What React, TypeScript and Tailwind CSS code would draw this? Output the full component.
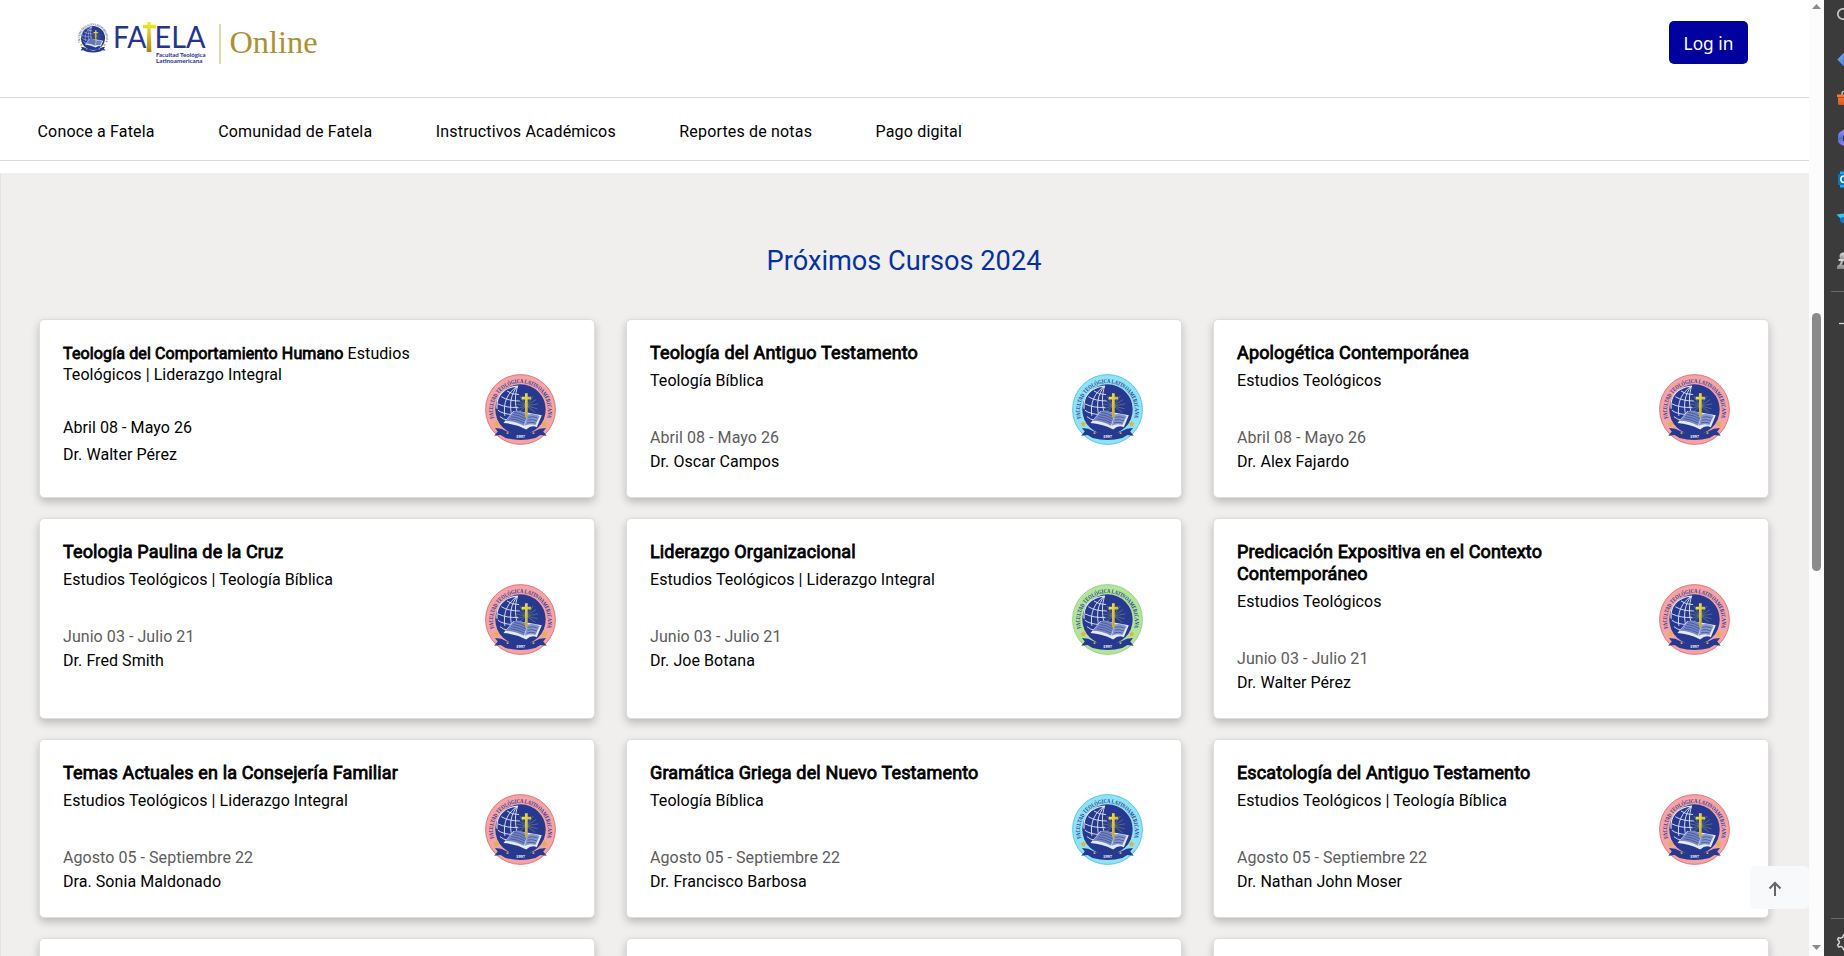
import React from "react";

type Tone = "red" | "blue" | "green";

type Course = {
  title: string;
  area: string;
  date: string;
  teacher: string;
  tone: Tone;
  inline?: boolean;
};

const courses: Course[] = [
  { title: "Teología del Comportamiento Humano", area: "Estudios Teológicos | Liderazgo Integral", date: "Abril 08 - Mayo 26", teacher: "Dr. Walter Pérez", tone: "red", inline: true },
  { title: "Teología del Antiguo Testamento", area: "Teología Bíblica", date: "Abril 08 - Mayo 26", teacher: "Dr. Oscar Campos", tone: "blue" },
  { title: "Apologética Contemporánea", area: "Estudios Teológicos", date: "Abril 08 - Mayo 26", teacher: "Dr. Alex Fajardo", tone: "red" },
  { title: "Teologia Paulina de la Cruz", area: "Estudios Teológicos | Teología Bíblica", date: "Junio 03 - Julio 21", teacher: "Dr. Fred Smith", tone: "red" },
  { title: "Liderazgo Organizacional", area: "Estudios Teológicos | Liderazgo Integral", date: "Junio 03 - Julio 21", teacher: "Dr. Joe Botana", tone: "green" },
  { title: "Predicación Expositiva en el Contexto Contemporáneo", area: "Estudios Teológicos", date: "Junio 03 - Julio 21", teacher: "Dr. Walter Pérez", tone: "red" },
  { title: "Temas Actuales en la Consejería Familiar", area: "Estudios Teológicos | Liderazgo Integral", date: "Agosto 05 - Septiembre 22", teacher: "Dra. Sonia Maldonado", tone: "red" },
  { title: "Gramática Griega del Nuevo Testamento", area: "Teología Bíblica", date: "Agosto 05 - Septiembre 22", teacher: "Dr. Francisco Barbosa", tone: "blue" },
  { title: "Escatología del Antiguo Testamento", area: "Estudios Teológicos | Teología Bíblica", date: "Agosto 05 - Septiembre 22", teacher: "Dr. Nathan John Moser", tone: "red" },
];

const tones: Record<Tone, { fill: string; edge: string }> = {
  red: { fill: "#f4a3a6", edge: "#e0686c" },
  blue: { fill: "#8fe3f7", edge: "#4cc0de" },
  green: { fill: "#b2e59b", edge: "#8fcf7c" },
};

const navItems = ["Conoce a Fatela", "Comunidad de Fatela", "Instructivos Académicos", "Reportes de notas", "Pago digital"];

function Seal({ tone, id, className }: { tone?: Tone; id: string; className: string }) {
  const c = tone ? tones[tone] : { fill: "#ffffff", edge: "#ffffff" };
  return (
    <svg viewBox="0 0 100 100" className={className}>
      <defs>
        <path id={id} d="M 13.5 64 A 38.6 38.6 0 1 1 86.5 64" />
        <linearGradient id={id + "g"} x1="0" x2="1" y1="0" y2="1">
          <stop offset="0" stopColor="#f7ef4e" />
          <stop offset="1" stopColor="#b1952a" />
        </linearGradient>
      </defs>
      <circle cx="50" cy="50" r="49.2" fill={c.fill} stroke={c.edge} strokeWidth="1.2" />
      <circle cx="50" cy="50" r="35.5" fill="#26388f" />
      <g fill="none" stroke="#dfe6f6" strokeWidth="1.3">
        <path d="M17 49C15 31 27 18 46 17" strokeWidth="1.6" />
        <path d="M46 17C32 26 25 40 28 59M46 17C36 28 34 44 38 60M46 17C42 29 42 42 45 53" />
        <path d="M31 24Q38 29 48 29M23 32Q33 38 49 38M18 42Q30 48 47 47M18 51Q26 57 40 57M21 60Q26 64 31 65" />
      </g>
      <g stroke="#8f9b72" strokeWidth=".7">
        <path d="M58 45L45 36M58 45L43 42M58 45L44 49M58 45L49 31M58 45L72 36M58 45L75 42M58 45L74 49M58 45L68 31M58 45L47 54M58 45L71 54" />
      </g>
      <path d="M26 69L40 52L57 54L80 58L73 75Q66 71 58 78Q42 70 26 69Z" fill="#e3e9f6" />
      <path d="M29 66L41 52Q50 50 60 57L55 73Q42 66 29 66Z" fill="#7687c2" />
      <path d="M60 57Q68 55 77 59L71 72Q63 69 56 73Z" fill="#8796ca" />
      <path d="M35 63Q46 64 55 69M37 60Q47 61 56 66M39 57Q49 58 57 63M41 54Q50 55 58 60M61 61Q68 59 74 62M60 65Q66 63 73 66M59 69Q65 67 71 69" fill="none" stroke="#34479a" strokeWidth="1" />
      <path d="M56.3 27H60.2V32H65V35.8H60.2V61H56.3V35.8H51.7V32H56.3Z" fill={`url(#${id}g)`} />
      <path d="M14 76L23 77L31 81Q50 88 69 81L77 77L86 76L82 81L87 87L78 86L71 90Q50 96 29 90L22 86L13 87L18 81Z" fill="#26388f" />
      <path d="M16 66l1.3 2.7 3 .4-2.2 2.1.5 3-2.6-1.4-2.7 1.4.5-3-2.1-2.1 3-.4zM84 66l1.3 2.7 3 .4-2.2 2.1.5 3-2.6-1.4-2.7 1.4.5-3-2.1-2.1 3-.4z" fill="#dcb53e" />
      <path d="M30.500 82h2.500v2.500h-2.500zM67 82h2.500v2.500H67z" fill="#c9b545" />
      <text x="50" y="89.500" fontSize="6.500" textAnchor="middle" fontWeight="700" fill="#ffffff" fontFamily="Liberation Serif, serif">1997</text>
      <text fontSize="8.500" fontWeight="700" fill="#2b3890" fontFamily="Liberation Serif, serif">
        <textPath href={"#" + id} startOffset="2" textLength="142" lengthAdjust="spacingAndGlyphs">FACULTAD TEOLÓGICA LATINOAMERICANA</textPath>
      </text>
    </svg>
  );
}

function Wordmark() {
  return (
    <svg width="246" height="62" viewBox="76 8 246 62">
      <defs>
        <linearGradient id="cross" x1="0" x2="0" y1="0" y2="1">
          <stop offset="0" stopColor="#f5ec25" />
          <stop offset=".45" stopColor="#d9c022" />
          <stop offset="1" stopColor="#a98719" />
        </linearGradient>
      </defs>
      <g fill="#23358f" fontFamily="Lato, sans-serif">
        <text x="113" y="47.800" fontSize="31" fontWeight="400" textLength="33.500" lengthAdjust="spacingAndGlyphs">FA</text>
        <text x="154.500" y="47.800" fontSize="31" fontWeight="400" textLength="51" lengthAdjust="spacingAndGlyphs">ELA</text>
        <text x="156" y="56.600" fontSize="6" fontWeight="700" textLength="49.500" lengthAdjust="spacingAndGlyphs">Facultad Teológica</text>
        <text x="156" y="62.600" fontSize="6" fontWeight="700" textLength="46.500" lengthAdjust="spacingAndGlyphs">Latinoamericana</text>
      </g>
      <path d="M147.200 22h3.600l-.4 2.800h5.600v3.400h-5.400l.8 23.800h-4.800l.8-23.800H143v-3.400h4.600z" fill="url(#cross)" />
      <path d="M220 24v40" stroke="#d8c486" strokeWidth="1.400" />
      <text x="229.500" y="52.900" fontSize="31.500" fill="#ab9135" fontFamily="Liberation Serif, serif" textLength="88" lengthAdjust="spacingAndGlyphs">Online</text>
    </svg>
  );
}

function CourseCard({ course, index }: { course: Course; index: number }) {
  return (
    <article className="flex items-center justify-between rounded-[5px] border border-[#dedddc] bg-white pr-[38px] pl-[23px] shadow-[0_4px_8px_rgba(0,0,0,0.22)]">
      {course.inline ? (
        <div className="w-[360px] self-start pt-[23px] text-base leading-[21px] tracking-[0.06px]">
          <p>
            <span className="tracking-[0.13px] [-webkit-text-stroke:0.8px_black]">{course.title}</span> {course.area}
          </p>
          <p className="mt-8">{course.date}</p>
          <p className="mt-1.5">{course.teacher}</p>
        </div>
      ) : (
        <div className="w-[360px] self-start pt-[22px] pb-[25px] text-base leading-[21px] tracking-[0.06px]">
          <h3 className="text-lg leading-[22px] tracking-[0.14px] [-webkit-text-stroke:0.8px_black]">{course.title}</h3>
          <p className="mt-1.5">{course.area}</p>
          <p className="mt-9 text-[#5c5c5c]">{course.date}</p>
          <p className="mt-[3px]">{course.teacher}</p>
        </div>
      )}
      <Seal tone={course.tone} id={"ring" + index} className="mt-0.5 size-[71px]" />
    </article>
  );
}

function BrowserRail() {
  return (
    <aside className="flex w-5 shrink-0 flex-col overflow-hidden bg-[#3b3b3b]">
      <svg width="20" height="956" viewBox="1824 0 20 956">
        <defs>
          <linearGradient id="tag" x1="0" x2="1" y1="0" y2="1">
            <stop offset="0" stopColor="#86adf5" />
            <stop offset="1" stopColor="#4478d8" />
          </linearGradient>
          <linearGradient id="bag" x1="0" x2="0" y1="0" y2="1">
            <stop offset="0" stopColor="#f4803c" />
            <stop offset="1" stopColor="#e2541b" />
          </linearGradient>
          <linearGradient id="m365" x1="0" x2="0" y1="0" y2="1">
            <stop offset="0" stopColor="#b48cf0" />
            <stop offset=".55" stopColor="#4b6fdc" />
            <stop offset="1" stopColor="#b47ae8" />
          </linearGradient>
          <linearGradient id="pawn" x1="0" x2="0" y1="0" y2="1">
            <stop offset="0" stopColor="#d8d8d8" />
            <stop offset="1" stopColor="#858585" />
          </linearGradient>
        </defs>
        <circle cx="1843" cy="14" r="5.200" fill="none" stroke="#c9c9c9" strokeWidth="1.700" />
        <path d="M1838 59.500L1845 52v15z" fill="url(#tag)" stroke="url(#tag)" strokeLinejoin="round" />
        <path d="M1842 95v-1.500a2 2 0 0 1 2-2" fill="none" stroke="#c8c8c8" strokeWidth="1.400" />
        <path d="M1837 94.500h8v10.500h-5.500a1.500 1.500 0 0 1-1.500-1.500V97h-1z" fill="url(#bag)" />
        <path d="M1837.500 97.500h7" stroke="#b33d10" strokeWidth=".8" />
        <path d="M1845 129l-5 3q-2 1.500-2 3.500v5q0 2 2 3.500l5 2.500z" fill="url(#m365)" />
        <path d="M1845 134q-2 1-2 3v4h2z" fill="#3b3b3b" />
        <path d="M1840 171.500h5v16h-5z" fill="#28a8ea" />
        <rect x="1838" y="174" width="10" height="11" rx="1" fill="#0078d4" />
        <circle cx="1844" cy="179.300" r="3.200" fill="none" stroke="white" strokeWidth="1.500" />
        <path d="M1836.500 214.500l8.500-1v9l-4-1-1-3.500z" fill="#35c4f0" />
        <path d="M1840 218l5-1.500v7l-4-1z" fill="#1478c8" />
        <circle cx="1843.500" cy="256.500" r="4" fill="url(#pawn)" />
        <path d="M1838.500 259h6v2h-1.500l-1 4h2.500v4h-7.500v-2q0-2 2.500-2.500l1.500-3.500h-2.500z" fill="url(#pawn)" />
        <path d="M1831 291.500h13" stroke="#6a6a6a" />
        <path d="M1839 323.500h5" stroke="#d4d4d4" strokeWidth="1.300" />
        <path d="M1831 918.500h13" stroke="#6a6a6a" />
        <path d="M1845 934.500l-1.500.5-.7 2.200-2 1-2.200-.6-1 2 1.600 1.700v2l-1.600 1.700 1 2 2.200-.6 2 1 .7 2.200 1.500.4" fill="none" stroke="#d4d4d4" strokeWidth="1.500" strokeLinejoin="round" />
      </svg>
    </aside>
  );
}

export default function App() {
  return (
    <div className="flex h-[956px] w-[1844px] overflow-hidden bg-white font-['Roboto',sans-serif] text-black">
      <div className="relative flex w-[1809px] shrink-0 flex-col overflow-hidden">
        <header className="flex h-[98px] shrink-0 items-start justify-between border-b border-[#d8d9da] pr-[61px] pl-[76px]">
          <div className="pt-2">
            <div className="relative">
              <Wordmark />
              <Seal id="brand" className="absolute top-[13px] left-0 size-[34px]" />
            </div>
          </div>
          <button className="mt-[21px] h-[43px] w-[79px] rounded-[5px] bg-[#00009f] pt-0.5 font-['Noto_Sans',sans-serif] text-[17.300px] text-white">Log in</button>
        </header>
        <nav className="flex h-[63px] shrink-0 items-center gap-[63.500px] border-b border-[#d8d9da] pt-1.5 pl-[37.500px] text-base tracking-[0.17px]">
          {navItems.map((item) => (
            <a key={item}>{item}</a>
          ))}
        </nav>
        <main className="mt-3 flex min-h-0 flex-1 flex-col overflow-hidden border-l border-[#e3e3e3] bg-[#f0efee]">
          <h2 className="mt-[72px] mb-[41px] shrink-0 pr-0.5 text-center text-[27.200px] leading-[33px] text-[#0532a0]">Próximos Cursos 2024</h2>
          <section className="grid shrink-0 grid-cols-[repeat(3,556px)] grid-rows-[179px_201px_179px_179px] gap-x-[31px] gap-y-5 pl-[38px]">
            {courses.map((course, i) => (
              <CourseCard key={course.title} course={course} index={i} />
            ))}
            {[0, 1, 2].map((i) => (
              <div key={i} className="rounded-[5px] border border-[#dedddc] bg-white shadow-[0_4px_8px_rgba(0,0,0,0.22)]" />
            ))}
          </section>
        </main>
        <button className="absolute top-[866px] right-0 flex h-[43px] w-[59px] items-center rounded-[5px] bg-[#f8f9fa] pt-0.5 pl-[18px]">
          <svg width="14" height="16" viewBox="0 0 14 16" fill="none" stroke="#666666" strokeWidth="2">
            <path d="M7 15V2M1.500 7.500L7 2l5.500 5.500" />
          </svg>
        </button>
      </div>
      <div className="flex w-[15px] shrink-0 flex-col items-center bg-[#fcfcfc]">
        <svg width="9" height="5" viewBox="0 0 9 5" className="mt-1 shrink-0">
          <path d="M4.500 0L9 5H0z" fill="#8b8b8b" />
        </svg>
        <div className="mt-[304px] h-[258px] w-[9px] rounded-full bg-[#8b8b8b]" />
        <svg width="9" height="5" viewBox="0 0 9 5" className="mt-auto mb-[6px] shrink-0">
          <path d="M0 0H9L4.500 5z" fill="#8b8b8b" />
        </svg>
      </div>
      <BrowserRail />
    </div>
  );
}
